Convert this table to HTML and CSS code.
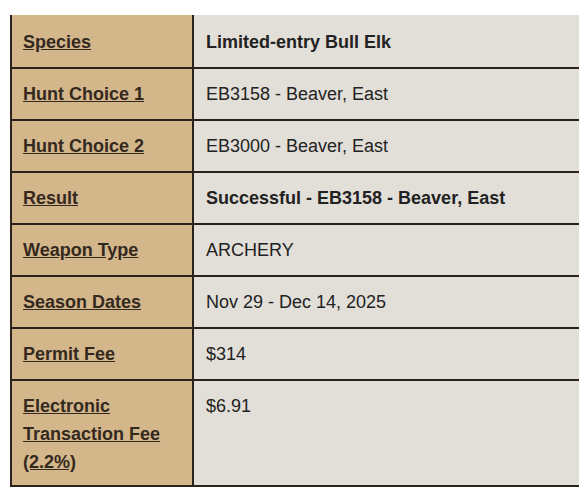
FILE: index.html
```html
<!DOCTYPE html>
<html lang="en">
<head>
<meta charset="utf-8">
<title>Hunt Details</title>
<link rel="stylesheet" href="styles.css">
</head>
<body>
<div class="wrap">
<table class="details">
  <tbody>
    <tr class="first">
      <th><a href="#">Species</a></th>
      <td class="strong">Limited-entry Bull Elk</td>
    </tr>
    <tr>
      <th><a href="#">Hunt Choice 1</a></th>
      <td>EB3158 - Beaver, East</td>
    </tr>
    <tr>
      <th><a href="#">Hunt Choice 2</a></th>
      <td>EB3000 - Beaver, East</td>
    </tr>
    <tr>
      <th><a href="#">Result</a></th>
      <td class="strong">Successful - EB3158 - Beaver, East</td>
    </tr>
    <tr>
      <th><a href="#">Weapon Type</a></th>
      <td>ARCHERY</td>
    </tr>
    <tr>
      <th><a href="#">Season Dates</a></th>
      <td>Nov 29 - Dec 14, 2025</td>
    </tr>
    <tr>
      <th><a href="#">Permit Fee</a></th>
      <td>$314</td>
    </tr>
    <tr class="last">
      <th><a href="#">Electronic Transaction Fee (2.2%)</a></th>
      <td>$6.91</td>
    </tr>
  </tbody>
</table>
</div>
</body>
</html>
```
FILE: styles.css
```css
html, body {
  margin: 0;
  padding: 0;
  background: #ffffff;
}
body {
  font-family: "Liberation Sans", Arial, sans-serif;
  font-size: 18px;
  line-height: 28px;
  color: #222222;
}
.wrap {
  padding: 15px 0 0 10px;
}
.details {
  border-collapse: separate;
  border-spacing: 0;
  width: 100%;
  border-left: 2px solid #2b231b;
}
.details th,
.details td {
  text-align: left;
  vertical-align: top;
  border-bottom: 2px solid #2b231b;
  padding: 11px 12px 11px 12px;
}
.details th {
  width: 157px;
  padding-left: 11px;
  background: #d3b68a;
  border-right: 2px solid #2b231b;
  font-weight: bold;
}
.details td {
  background: #e2dfd9;
  font-weight: normal;
}
.details tr.first th,
.details tr.first td {
  padding-top: 13px;
}
.details tr.last th,
.details tr.last td {
  padding-bottom: 9px;
}
.details td.strong {
  font-weight: bold;
}
.details th a {
  color: #34291f;
  text-decoration: underline;
}
```
